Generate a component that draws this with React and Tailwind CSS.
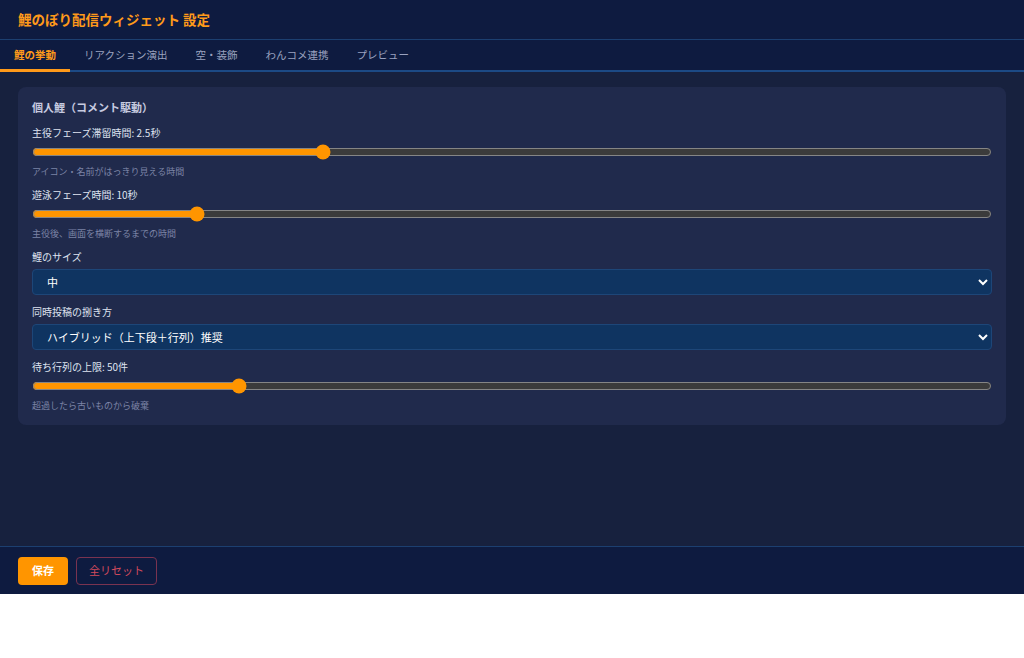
import React, { useState } from 'react';

const tabs = ['鯉の挙動', 'リアクション演出', '空・装飾', 'わんコメ連携', 'プレビュー'];

const Slider = ({ label, value, min, max, step, onChange, hint }) => (
  <div className="flex flex-col">
    <label className="text-[10px] leading-[14px] text-[#dfe3f0]">{label}</label>
    <input
      type="range"
      min={min}
      max={max}
      step={step}
      value={value}
      onChange={(e) => onChange(Number(e.target.value))}
      className="mt-[4px] h-[16px] w-full accent-[#ff9500] [color-scheme:dark]"
    />
    <p className="mt-[6px] text-[9px] leading-[12px] text-[#7c84a6]">{hint}</p>
  </div>
);

const Select = ({ label, value, options, onChange }) => (
  <div className="flex flex-col">
    <label className="text-[10px] leading-[14px] text-[#dfe3f0]">{label}</label>
    <select
      value={value}
      onChange={(e) => onChange(e.target.value)}
      className="mt-[5px] h-[26px] w-full rounded-[4px] border border-[#1d4678] bg-[#0f3461] pl-[10px] pr-2 text-[11px] text-white [color-scheme:dark]"
    >
      {options.map((o) => (
        <option key={o}>{o}</option>
      ))}
    </select>
  </div>
);

export default function App() {
  const [active, setActive] = useState(0);
  const [stay, setStay] = useState(2.5);
  const [swim, setSwim] = useState(10);
  const [size, setSize] = useState('中');
  const [mode, setMode] = useState('ハイブリッド（上下段＋行列）推奨');
  const [queue, setQueue] = useState(50);

  return (
    <div
      className="flex h-[594px] flex-col bg-[#17213e]"
      style={{ fontFamily: '"Noto Sans CJK JP", "Noto Sans", sans-serif' }}
    >
      {/* ヘッダー */}
      <header className="flex h-10 shrink-0 items-center border-b border-[#1c3f70] bg-[#0e1b40] px-[18px]">
        <h1 className="text-[13.5px] font-bold text-[#ff9a1a]">鯉のぼり配信ウィジェット 設定</h1>
      </header>

      {/* タブ */}
      <nav className="flex h-[32px] shrink-0 border-b-2 border-[#1c4a85] bg-[#0e1b40]">
        {tabs.map((t, i) => (
          <button
            key={t}
            onClick={() => setActive(i)}
            className={
              i === active
                ? 'mb-[-2px] border-b-[3px] border-[#ff9a1a] px-[14px] text-[10.5px] font-bold text-[#ff9a1a]'
                : 'mb-[-2px] border-b-[3px] border-transparent px-[14px] text-[10.5px] text-[#9aa2bf]'
            }
          >
            {t}
          </button>
        ))}
      </nav>

      <main className="flex-1 px-[18px] pt-[15px]">
        <section className="flex flex-col gap-[10px] rounded-lg bg-[#202a4c] px-[14px] pt-[12px] pb-[13px]">
          <h2 className="text-[11px] font-bold text-[#c7cbe0]">個人鯉（コメント駆動）</h2>
          <Slider
            label={`主役フェーズ滞留時間: ${stay}秒`}
            value={stay}
            min={1}
            max={6}
            step={0.5}
            onChange={setStay}
            hint="アイコン・名前がはっきり見える時間"
          />
          <Slider
            label={`遊泳フェーズ時間: ${swim}秒`}
            value={swim}
            min={5}
            max={35}
            step={1}
            onChange={setSwim}
            hint="主役後、画面を横断するまでの時間"
          />
          <Select label="鯉のサイズ" value={size} options={['小', '中', '大']} onChange={setSize} />
          <Select
            label="同時投稿の捌き方"
            value={mode}
            options={['ハイブリッド（上下段＋行列）推奨', '上下段のみ', '行列のみ']}
            onChange={setMode}
          />
          <Slider
            label={`待ち行列の上限: ${queue}件`}
            value={queue}
            min={10}
            max={200}
            step={10}
            onChange={setQueue}
            hint="超過したら古いものから破棄"
          />
        </section>
      </main>

      {/* フッター */}
      <footer className="flex h-12 shrink-0 items-center gap-2 border-t border-[#1c3f70] bg-[#0e1b40] px-[18px]">
        <button className="h-[28px] rounded-[4px] bg-[#ff9500] px-[14px] text-[11px] font-bold text-white">保存</button>
        <button className="h-[28px] rounded-[4px] border border-[#7a3350] px-[12px] text-[11px] text-[#d24a5c]">
          全リセット
        </button>
      </footer>
    </div>
  );
}
